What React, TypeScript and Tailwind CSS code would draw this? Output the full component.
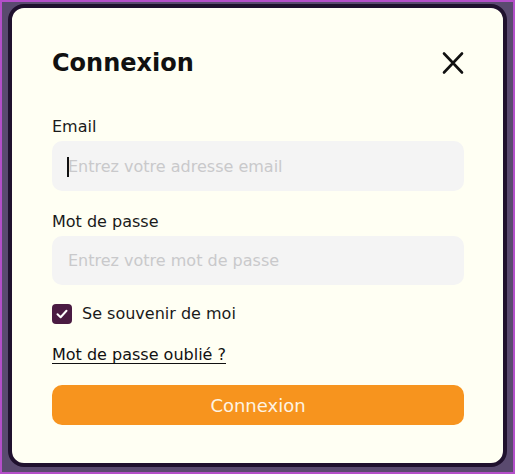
import React from "react";

export default function App() {
  const font = { fontFamily: '"DejaVu Sans", sans-serif' };
  return (
    <div
      className="w-[515px] h-[474px] border-2 border-[#b44fc9] bg-[#5a4a6f] pt-[2px] px-[6px] pb-[5px] box-border"
      style={font}
    >
      <div className="h-full w-full rounded-[16px] border-4 border-[#20112e] bg-[#fffff3] box-border pl-10 pr-[39px] pt-[39px]">
        <div className="flex items-center justify-between h-8">
          <h1 className="text-[24px] leading-8 font-bold text-[#111]">Connexion</h1>
          <button className="w-6 h-6 flex items-center justify-center mr-[-1px]">
            <svg width="24" height="24" viewBox="0 0 24 24" fill="none" stroke="#111" strokeWidth="2.6" strokeLinecap="round">
              <path d="M3 2.5L21 21.5M21 2.5L3 21.5" />
            </svg>
          </button>
        </div>

        <label className="block mt-[36px] text-[16px] leading-6 text-[#1a1a1a]">Email</label>
        <div className="relative mt-[2px]">
          <input
            className="w-full h-[50px] rounded-[10px] bg-[#f4f4f4] px-4 text-[16px] outline-none placeholder:text-[#c9c9cb]"
            style={font}
            placeholder="Entrez votre adresse email"
          />
          <span className="absolute left-[15px] top-[16px] w-[1.5px] h-[20px] bg-[#111]" />
        </div>

        <label className="block mt-[19px] text-[16px] leading-6 text-[#1a1a1a]">Mot de passe</label>
        <input
          type="password"
          className="mt-[2px] w-full h-[49px] rounded-[10px] bg-[#f4f4f4] px-4 text-[16px] outline-none placeholder:text-[#c9c9cb]"
          style={font}
          placeholder="Entrez votre mot de passe"
        />

        <div className="mt-[17px] flex items-center h-6 gap-[10px]">
          <span className="w-5 h-5 rounded-[4px] bg-[#4a1b42] flex items-center justify-center">
            <svg width="14" height="14" viewBox="0 0 14 14" fill="none" stroke="#fff" strokeWidth="2" strokeLinecap="round" strokeLinejoin="round">
              <path d="M2.5 7.2L5.6 10.2L11.5 3.8" />
            </svg>
          </span>
          <span className="text-[16px] leading-6 text-[#1a1a1a]">Se souvenir de moi</span>
        </div>

        <div className="mt-[17px] h-6">
          <a className="text-[16px] leading-6 text-[#111] underline underline-offset-[3px]">Mot de passe oublié ?</a>
        </div>

        <button className="mt-[18px] w-full h-10 rounded-[10px] bg-[#f7941e] text-[18px] text-[#fdf3e3]" style={font}>
          Connexion
        </button>
      </div>
    </div>
  );
}
